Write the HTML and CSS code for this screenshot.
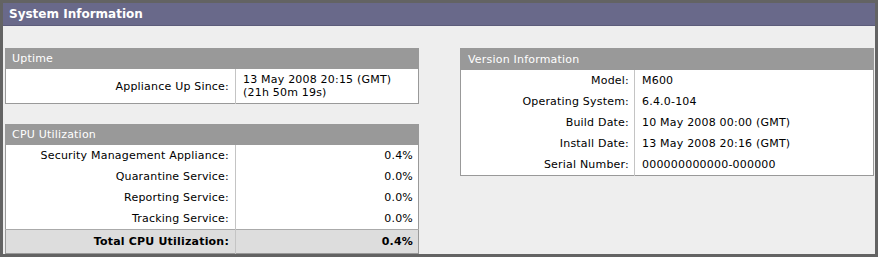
FILE: index.html
```html
<!DOCTYPE html>
<html lang="en">
<head>
    <meta charset="UTF-8">
    <title>System Information</title>
    <link rel="stylesheet" href="styles.css">
</head>
<body>
    <div class="panel">
        <div class="panel-title">System Information</div>
        <div class="panel-body">
            <div class="column">
                <table class="info">
                    <tr><th colspan="2">Uptime</th></tr>
                    <tr>
                        <td class="label wide">Appliance Up Since:</td>
                        <td class="value">13 May 2008 20:15 (GMT)<br>(21h 50m 19s)</td>
                    </tr>
                </table>
                <table class="info cpu">
                    <tr><th colspan="2">CPU Utilization</th></tr>
                    <tr><td class="label wide">Security Management Appliance:</td><td class="value num">0.4%</td></tr>
                    <tr><td class="label">Quarantine Service:</td><td class="value num">0.0%</td></tr>
                    <tr><td class="label">Reporting Service:</td><td class="value num">0.0%</td></tr>
                    <tr><td class="label">Tracking Service:</td><td class="value num">0.0%</td></tr>
                    <tr class="total"><td class="label">Total CPU Utilization:</td><td class="value num">0.4%</td></tr>
                </table>
            </div>
            <div class="column">
                <table class="info version">
                    <tr><th colspan="2">Version Information</th></tr>
                    <tr><td class="label">Model:</td><td class="value">M600</td></tr>
                    <tr><td class="label">Operating System:</td><td class="value">6.4.0-104</td></tr>
                    <tr><td class="label">Build Date:</td><td class="value">10 May 2008 00:00 (GMT)</td></tr>
                    <tr><td class="label">Install Date:</td><td class="value">13 May 2008 20:16 (GMT)</td></tr>
                    <tr><td class="label">Serial Number:</td><td class="value">000000000000-000000</td></tr>
                </table>
            </div>
        </div>
    </div>
</body>
</html>
```

FILE: styles.css
```css
body {
    margin: 0;
    background-color: #ffffff;
    font-family: "DejaVu Sans", Verdana, sans-serif;
    font-size: 11px;
    letter-spacing: 0.2px;
    color: #000000;
}
.panel {
    width: 872px;
    border: 3px solid #636363;
    background-color: #eeeeee;
}
.panel-title {
    height: 23px;
    line-height: 22px;
    padding-left: 6px;
    background-color: #69698a;
    color: #ffffff;
    font-size: 12px;
    font-weight: bold;
    letter-spacing: 0;
    border-bottom: 1px solid #5c5c7a;
    box-sizing: border-box;
}
.panel-body {
    display: grid;
    grid-template-columns: 414px 414px;
    justify-content: space-between;
    padding: 22px 1px 0 2px;
}
.column {
    display: flex;
    flex-direction: column;
    gap: 20px;
}
.info {
    width: 100%;
    border-collapse: collapse;
    border: 1px solid #999999;
    background-color: #ffffff;
}
.info th {
    height: 20px;
    padding: 0 6px;
    background-color: #999999;
    color: #ffffff;
    font-weight: normal;
    text-align: left;
    line-height: 20px;
}
.info td {
    padding: 4px 6px;
    line-height: 13px;
    vertical-align: middle;
}
.info .label {
    text-align: right;
    border-right: 1px solid #c4c4c4;
}
.info .wide {
    width: 217px;
}
.info .value {
    padding-left: 7px;
}
.info .num {
    text-align: right;
    padding-right: 5px;
}
.version th {
    height: 21px;
    padding-left: 7px;
}
.version .label {
    width: 162px;
    padding-right: 5px;
}
.total td {
    background-color: #dddddd;
    border-top: 1px solid #aaaaaa;
    font-weight: bold;
    padding: 5px 6px;
}
```
